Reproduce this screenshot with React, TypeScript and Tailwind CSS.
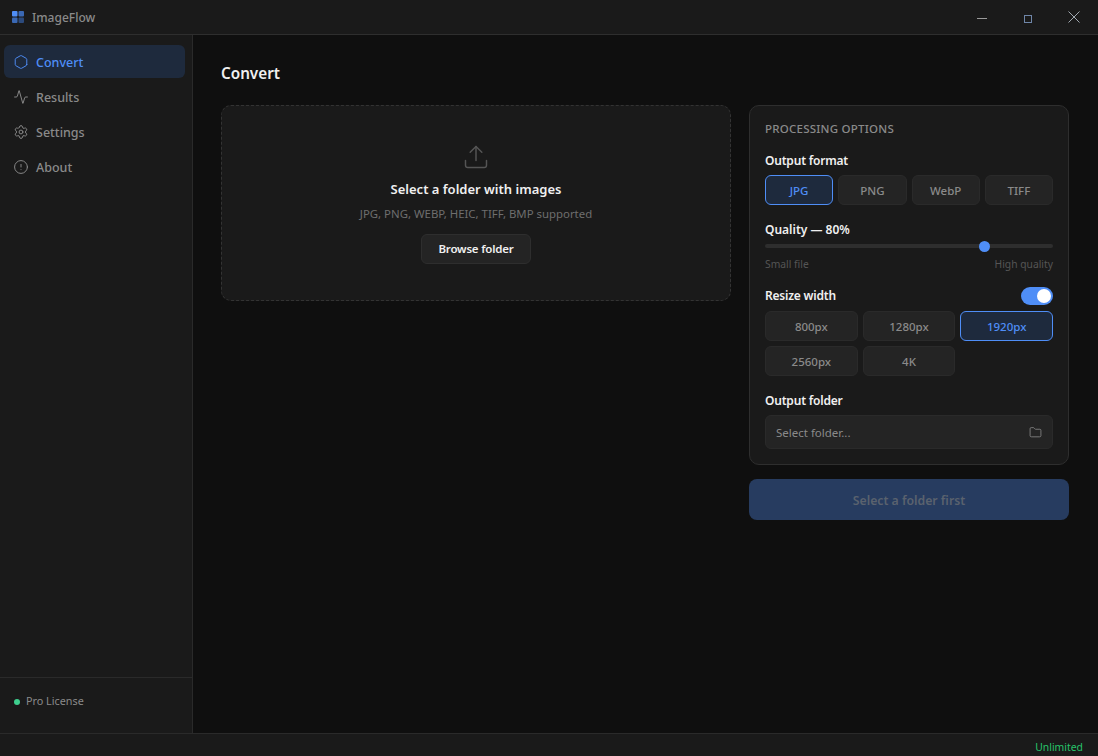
import { Activity, AlertCircle, Folder, Hexagon, Settings, Upload } from "lucide-react";

const formats = ["JPG", "PNG", "WebP", "TIFF"];
const widths = ["800px", "1280px", "1920px", "2560px", "4K"];

const nav = [
  { label: "Convert", icon: Hexagon, active: true },
  { label: "Results", icon: Activity, active: false },
  { label: "Settings", icon: Settings, active: false },
  { label: "About", icon: AlertCircle, active: false },
];

function Choice({ label, active }: { label: string; active: boolean }) {
  return (
    <button
      className={`flex h-[30px] items-center justify-center rounded-md border pt-px text-[11.5px] font-medium ${
        active
          ? "border-[#4f8ef7] bg-[#1e2a3d] text-[#4f8ef7]"
          : "border-[#2a2a2a] bg-[#242424] text-[#8a8a8a]"
      }`}
    >
      {label}
    </button>
  );
}

export default function App() {
  return (
    <div className="flex h-[756px] w-[1098px] flex-col overflow-hidden bg-[#0f0f0f] font-['Noto_Sans',sans-serif] text-white">
      {/* Title bar */}
      <div className="flex h-[35px] shrink-0 items-center border-b border-[#2e2e2e] bg-[#1a1a1a] pl-3">
        <svg width="12" height="12" viewBox="0 0 12 12" className="mr-2">
          <rect x="0" y="0" width="5.5" height="5.5" rx="1" fill="#4f8ef7" />
          <rect x="6.5" y="0" width="5.5" height="5.5" rx="1" fill="#3a68b4" />
          <rect x="0" y="6.5" width="5.5" height="5.5" rx="1" fill="#3a68b4" />
          <rect x="6.5" y="6.5" width="5.5" height="5.5" rx="1" fill="#2c4a7c" />
        </svg>
        <span className="pt-px text-[12px] font-medium text-[#8a8a8a]">ImageFlow</span>
        <div className="ml-auto flex items-center">
          <svg width="10" height="10" viewBox="0 0 10 10" className="mt-[2px] mr-[37px]">
            <path d="M0 5.5H10" stroke="#9a9a9a" strokeWidth="1" />
          </svg>
          <svg width="8" height="8" viewBox="0 0 8 8" className="mt-[3px] mr-[36px]">
            <rect x="0.5" y="0.5" width="7" height="7" fill="none" stroke="#6f86a8" strokeWidth="1" />
          </svg>
          <svg width="12" height="12" viewBox="0 0 12 12" className="mr-[18px]">
            <path d="M0.5 0.5L11.5 11.5M11.5 0.5L0.5 11.5" stroke="#a0a8b0" strokeWidth="1" />
          </svg>
        </div>
      </div>

      <div className="flex min-h-0 flex-1">
        {/* Sidebar */}
        <aside className="flex w-[193px] shrink-0 flex-col border-r border-[#2a2a2a] bg-[#1a1a1a]">
          <nav className="flex flex-1 flex-col gap-[2px] pt-[10px] pr-[7px] pl-1">
            {nav.map((item) => (
              <div
                key={item.label}
                className={`flex h-[33px] items-center gap-[8px] rounded-md px-[10px] text-[12.5px] font-medium ${
                  item.active ? "bg-[#1e2a3d] text-[#4f8ef7]" : "text-[#8a8a8a]"
                }`}
              >
                <item.icon size={14} strokeWidth={1.5} className="mt-px shrink-0 scale-110" />
                <span className="mt-[3px]">{item.label}</span>
              </div>
            ))}
          </nav>
          <div className="flex h-[56px] items-center gap-[6px] border-t border-[#2a2a2a] pb-[8px] pl-[14px]">
            <span className="h-[6px] w-[6px] rounded-full bg-[#3ecf8e]" />
            <span className="text-[10.8px] text-[#8a8a8a]">Pro License</span>
          </div>
        </aside>

        {/* Main */}
        <main className="min-w-0 flex-1 px-[28px] pt-[27px]">
          <h1 className="text-[15.25px] leading-[22px] font-semibold text-[#f0f0f0]">Convert</h1>
          <div className="mt-[21px] flex items-start gap-[18px]">
            <section className="flex h-[196px] w-[510px] flex-col items-center rounded-[10px] border border-dashed border-[#333333] bg-[#1a1a1a] pt-[37px]">
              <Upload size={28} strokeWidth={1.25} className="text-[#555555]" />
              <p className="mt-[9px] text-[13px] leading-[18px] font-semibold text-[#f0f0f0]">
                Select a folder with images
              </p>
              <p className="mt-[8px] text-[11.4px] leading-[16px] text-[#6e6e6e]">
                JPG, PNG, WEBP, HEIC, TIFF, BMP supported
              </p>
              <button className="mt-[12px] flex h-[30px] w-[110px] items-center justify-center rounded-md border border-[#2e2e2e] bg-[#242424] text-[11.5px] font-semibold tracking-[-0.2px] text-[#f0f0f0]">
                Browse folder
              </button>
            </section>

            <div className="flex w-[320px] flex-col gap-[14px]">
              <section className="flex h-[360px] flex-col rounded-[10px] border border-[#2e2e2e] bg-[#1a1a1a] px-[15px] pt-[15px]">
                <h2 className="text-[11.5px] leading-[16px] font-medium tracking-[0.02em] text-[#8a8a8a]">
                  PROCESSING OPTIONS
                </h2>

                <p className="mt-[15px] text-[12px] leading-[17px] font-semibold tracking-[-0.2px] text-[#f0f0f0]">
                  Output format
                </p>
                <div className="mt-[6px] grid grid-cols-4 gap-[5px]">
                  {formats.map((f) => (
                    <Choice key={f} label={f} active={f === "JPG"} />
                  ))}
                </div>

                <p className="mt-[16px] text-[12px] leading-[17px] font-semibold text-[#f0f0f0]">Quality — 80%</p>
                <div className="relative mt-[6px] h-[4px] rounded-full bg-[#2e2e2e]">
                  <span className="absolute top-[-3.5px] left-[214px] h-[11px] w-[11px] rounded-full bg-[#4f8ef7]" />
                </div>
                <div className="mt-[9px] flex justify-between text-[10.3px] leading-[14px] text-[#555555]">
                  <span>Small file</span>
                  <span>High quality</span>
                </div>

                <div className="mt-[16px] flex h-[17px] items-center justify-between">
                  <p className="text-[12px] leading-[17px] font-semibold tracking-[-0.2px] text-[#f0f0f0]">Resize width</p>
                  <span className="relative h-[18px] w-[32px] rounded-full bg-[#4f8ef7]">
                    <span className="absolute top-[2px] right-[2px] h-[14px] w-[14px] rounded-full bg-white" />
                  </span>
                </div>
                <div className="mt-[7px] grid grid-cols-3 gap-[5px]">
                  {widths.map((w) => (
                    <Choice key={w} label={w} active={w === "1920px"} />
                  ))}
                </div>

                <p className="mt-[16px] text-[12px] leading-[17px] font-semibold tracking-[-0.2px] text-[#f0f0f0]">
                  Output folder
                </p>
                <div className="mt-[6px] flex h-[34px] items-center justify-between rounded-md border border-[#2a2a2a] bg-[#242424] px-[10px]">
                  <span className="pt-px text-[11.5px] text-[#8a8a8a]">Select folder...</span>
                  <Folder size={13} strokeWidth={1.5} className="text-[#8a8a8a]" />
                </div>
              </section>

              <button className="flex h-[41px] items-center justify-center rounded-[8px] bg-[#273c60] pt-[3px] text-[12.25px] font-semibold text-[#5a626e]">
                Select a folder first
              </button>
            </div>
          </div>
        </main>
      </div>

      {/* Status bar */}
      <div className="flex h-[23px] shrink-0 items-center justify-end border-t border-[#2a2a2a] bg-[#1a1a1a] pt-[5px] pr-[15px]">
        <span className="text-[10.4px] text-[#27c46b]">Unlimited</span>
      </div>
    </div>
  );
}
